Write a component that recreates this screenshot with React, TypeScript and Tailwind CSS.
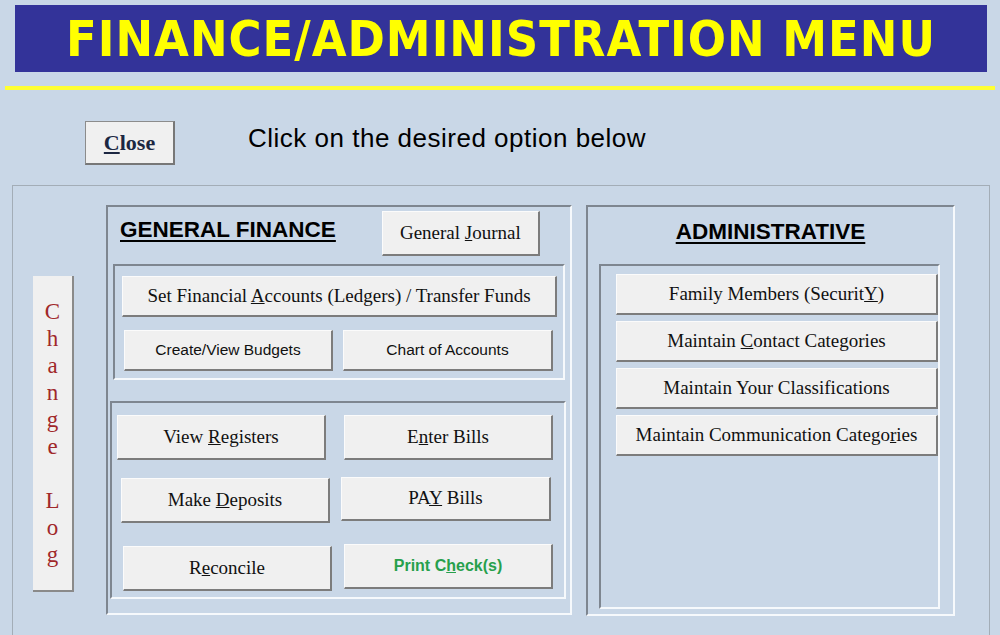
import React from 'react';

const serif = "font-['Liberation_Serif','Times_New_Roman',serif]";
const sans = "font-['Liberation_Sans',Arial,sans-serif]";

const Btn = ({
  className = '',
  color = 'text-[#111]',
  children,
}: {
  className?: string;
  color?: string;
  children: React.ReactNode;
}) => (
  <button
    className={`flex items-center justify-center bg-[#f0f0f0] border-t border-l border-[#fbfbfb] border-r-2 border-b-2 border-r-[#7c7c7c] border-b-[#7c7c7c] ${color} ${className}`}
  >
    <span>{children}</span>
  </button>
);

const Frame = ({ className = '', children }: { className?: string; children?: React.ReactNode }) => (
  <div className={`border-t-2 border-l-2 border-t-[#7e8690] border-l-[#7e8690] border-b-2 border-r-2 border-b-[#f6f9fc] border-r-[#f6f9fc] ${className}`}>
    {children}
  </div>
);

const changeLog = ['C', 'h', 'a', 'n', 'g', 'e', '\u00a0', 'L', 'o', 'g'];

const App = () => {
  return (
    <div className={`w-[1000px] h-[635px] overflow-hidden bg-[#c9d7e7] ${sans}`}>
      <div className="ml-[15px] mt-[5px] w-[972px] h-[67px] bg-[#333399] flex items-center justify-center">
        <h1 className="font-['DejaVu_Sans_Condensed','DejaVu_Sans',sans-serif] font-bold font-stretch-condensed text-[50px] leading-none text-[#ffff00] tracking-[1px]">
          FINANCE/ADMINISTRATION MENU
        </h1>
      </div>
      <div className="ml-[5px] mt-[14px] w-[990px] h-[4px] bg-[#ffff33]" />

      <div className="flex items-start mt-[31px]">
        <button className={`ml-[85px] w-[90px] h-[44px] bg-[#f0f0f0] border border-[#8c8c8c] border-r-2 border-b-2 border-r-[#777] border-b-[#777] ${serif} font-bold text-[22px] text-[#1c2742]`}>
          <u>C</u>lose
        </button>
        <p className="ml-[73px] -mt-[2px] text-[26px] tracking-[0.5px] text-black">Click on the desired option below</p>
      </div>

      <div className="ml-[12px] mt-[20px] w-[978px] h-[470px] border-t border-l border-r border-[#a3adb7] flex items-start pt-[19px]">
        <div className={`ml-[20px] mt-[71px] w-[41px] h-[316px] bg-[#f0f0f0] border-r-2 border-b-2 border-[#8a8a8a] flex flex-col items-center pt-[22px] ${serif} text-[23px] leading-[27px] text-[#a0282a]`}>
          {changeLog.map((c, i) => (
            <span key={i}>{c}</span>
          ))}
        </div>

        <Frame className="ml-[32px] w-[466px] h-[410px]">
          <div className="flex items-start pt-[4px]">
            <h2 className="ml-[12px] mt-[2px] text-[22.5px] font-bold underline underline-offset-[3px] text-black">GENERAL FINANCE</h2>
            <Btn className={`ml-[46px] w-[158px] h-[45px] ${serif} text-[19px]`}>
              General <u>J</u>ournal
            </Btn>
          </div>
          <Frame className="ml-[5px] mt-[8px] w-[452px] h-[116px]">
            <Btn className={`ml-[7px] mt-[10px] w-[435px] h-[41px] ${serif} text-[19px]`}>
              Set Financial <u>A</u>ccounts (Ledgers) / Transfer Funds
            </Btn>
            <div className="flex mt-[13px]">
              <Btn className="ml-[9px] w-[209px] h-[41px] text-[15.5px]">Create/View Budgets</Btn>
              <Btn className="ml-[10px] w-[210px] h-[41px] text-[15.5px]">Chart of Accounts</Btn>
            </div>
          </Frame>
          <Frame className="ml-[2px] mt-[21px] w-[456px] h-[198px]">
            <div className="flex items-start mt-[12px]">
              <Btn className={`ml-[5px] w-[209px] h-[45px] ${serif} text-[19px]`}>
                View <u>R</u>egisters
              </Btn>
              <Btn className={`ml-[18px] w-[209px] h-[45px] ${serif} text-[19px]`}>
                E<u>n</u>ter Bills
              </Btn>
            </div>
            <div className="flex items-start mt-[17px]">
              <Btn className={`ml-[9px] mt-[1px] w-[209px] h-[45px] ${serif} text-[19px]`}>
                Make <u>D</u>eposits
              </Btn>
              <Btn className={`ml-[11px] w-[210px] h-[44px] ${serif} text-[19px]`}>
                PA<u>Y</u> Bills
              </Btn>
            </div>
            <div className="flex items-start mt-[21px]">
              <Btn className={`ml-[11px] mt-[2px] w-[209px] h-[45px] ${serif} text-[19px]`}>
                R<u>e</u>concile
              </Btn>
              <Btn className="ml-[12px] w-[209px] h-[45px] text-[16px] font-bold" color="text-[#27a04c]">
                Print C<u>h</u>eck(s)
              </Btn>
            </div>
          </Frame>
        </Frame>

        <Frame className="ml-[14px] w-[369px] h-[411px]">
          <h2 className="mt-[8px] text-center text-[22.5px] font-bold underline underline-offset-[3px] text-black">ADMINISTRATIVE</h2>
          <Frame className="ml-[11px] mt-[15px] w-[341px] h-[345px] flex flex-col gap-[6px] pt-[8px]">
            <Btn className={`ml-[15px] w-[322px] h-[41px] ${serif} text-[19px]`}>
              Family Members (Securit<u>Y</u>)
            </Btn>
            <Btn className={`ml-[15px] w-[322px] h-[41px] ${serif} text-[19px]`}>
              Maintain <u>C</u>ontact Categories
            </Btn>
            <Btn className={`ml-[15px] w-[322px] h-[41px] ${serif} text-[19px]`}>
              Maintain Your Classifications
            </Btn>
            <Btn className={`ml-[15px] w-[322px] h-[41px] ${serif} text-[19px]`}>
              Maintain Communication Catego<u>r</u>ies
            </Btn>
          </Frame>
        </Frame>
      </div>
    </div>
  );
};

export default App;
